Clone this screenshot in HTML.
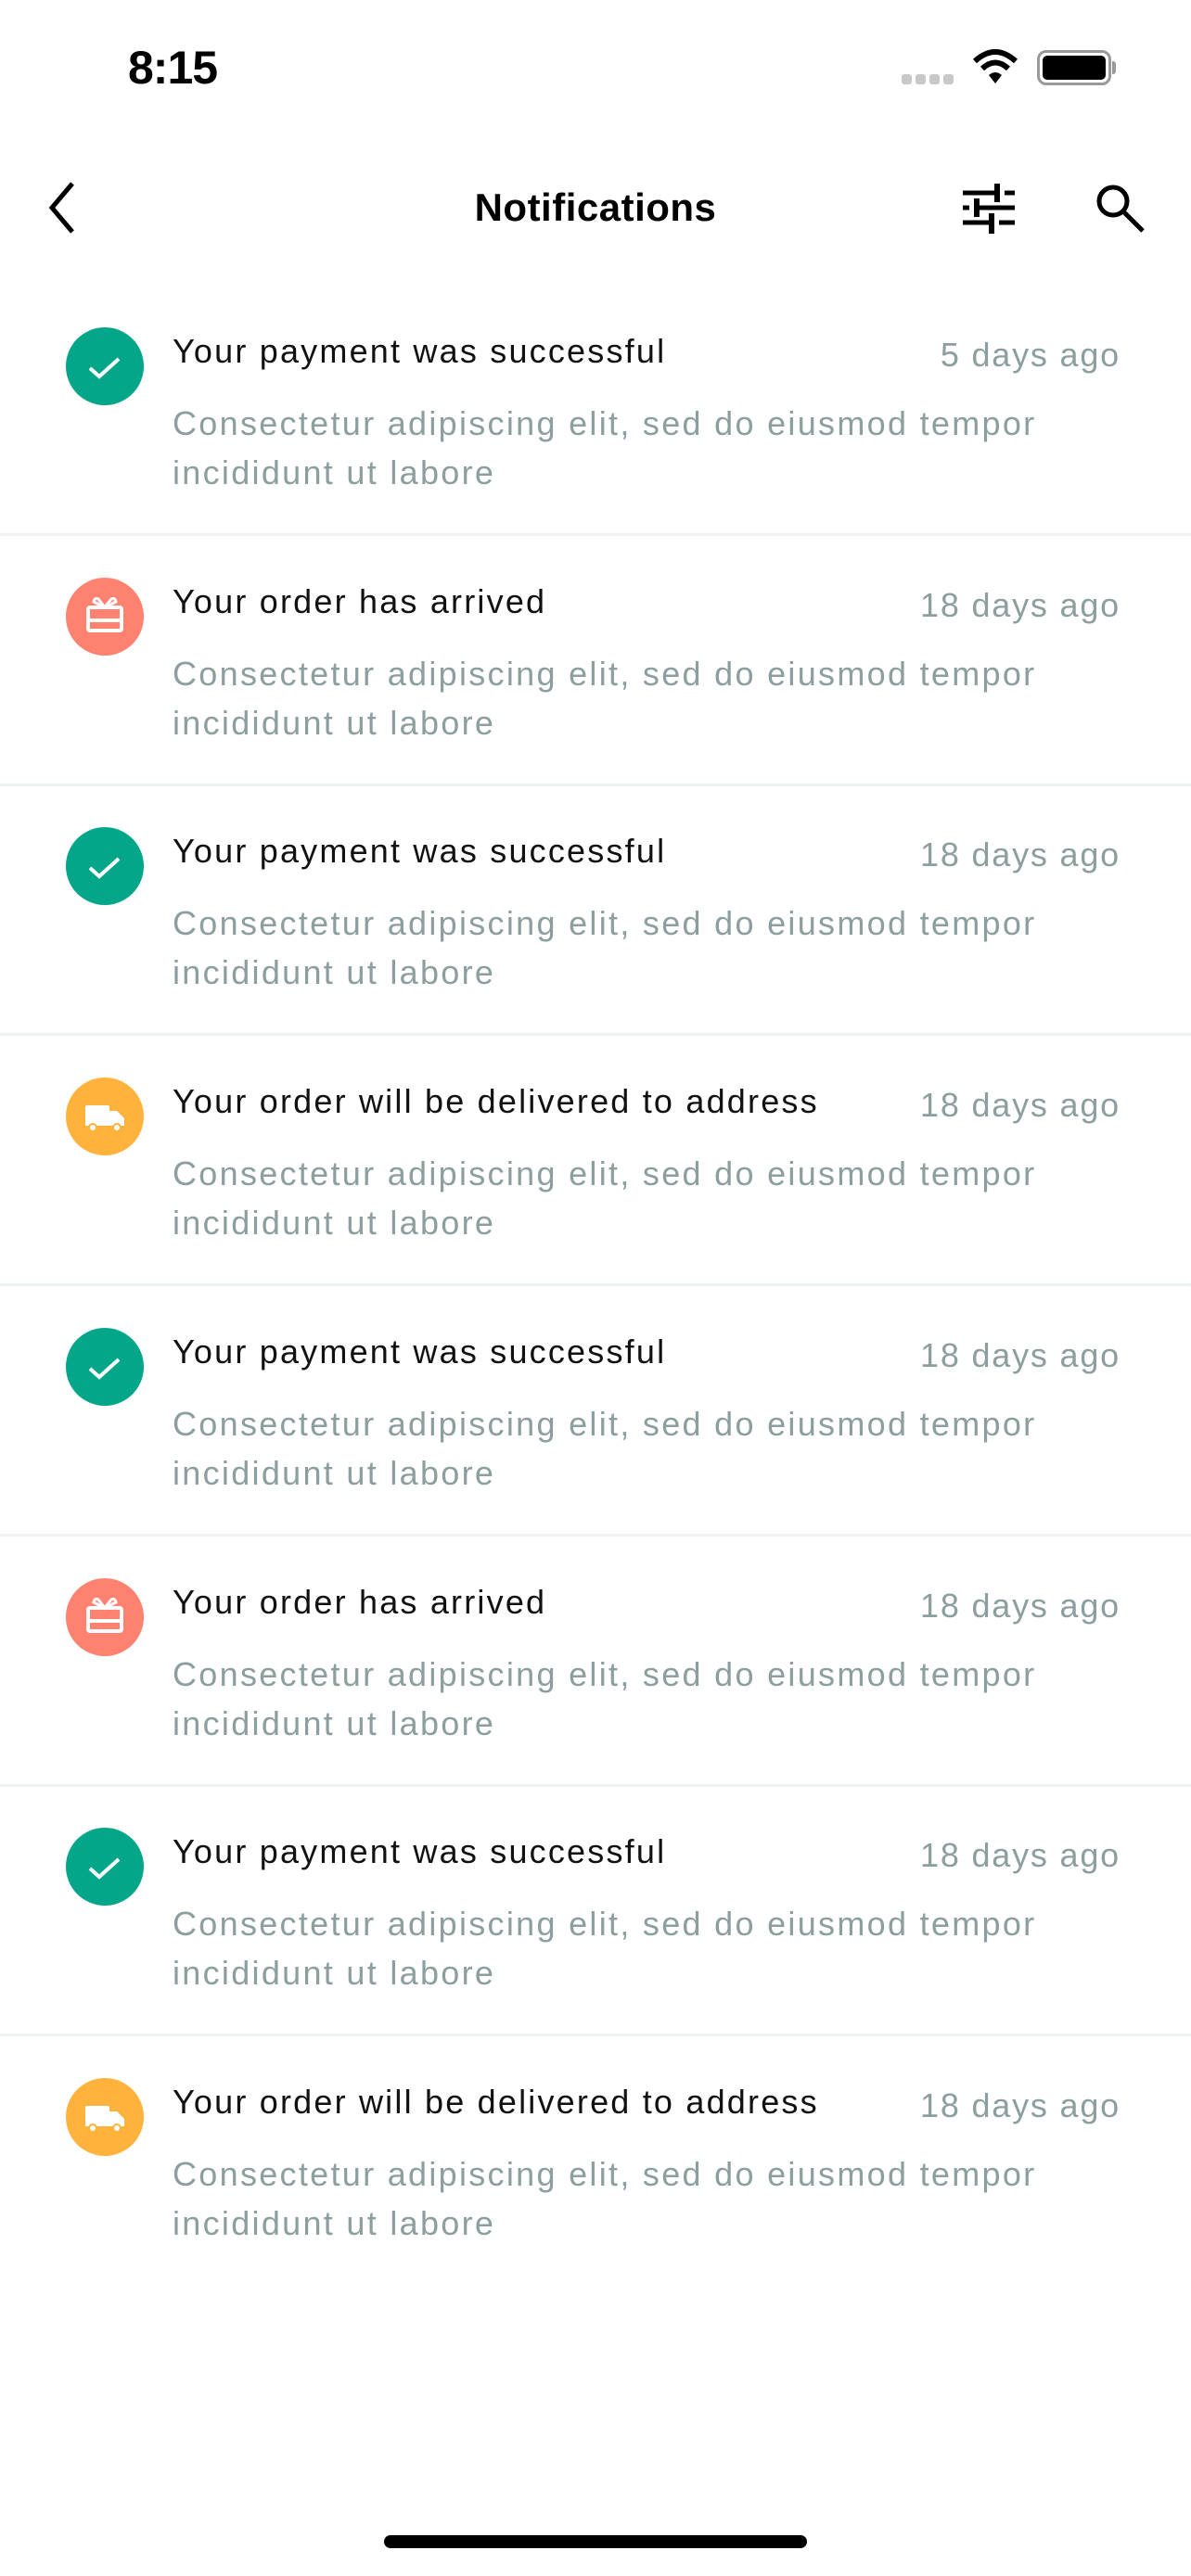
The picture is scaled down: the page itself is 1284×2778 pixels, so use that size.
<!DOCTYPE html>
<html><head><meta charset="utf-8"><style>
*{margin:0;padding:0;box-sizing:border-box}
body{width:1284px;height:2778px;background:#fff;font-family:"Liberation Sans",sans-serif;position:relative;overflow:hidden}
.abs{position:absolute}
.row{position:absolute;left:0;width:1284px;height:270px}
.sep{position:absolute;left:0;width:1284px;height:3px;background:#eff2f2}
.ic{position:absolute;left:71px;top:19px;width:84px;height:84px;border-radius:50%}
.t{position:absolute;left:186px;top:24px;font-size:36px;color:#111;letter-spacing:2.2px;white-space:nowrap}
.d{position:absolute;left:186px;top:96px;font-size:36px;color:#8c9e9d;letter-spacing:2.3px;line-height:53px;width:1050px}
.tm{position:absolute;right:76px;top:28px;font-size:36px;color:#8c9e9d;letter-spacing:1.8px;white-space:nowrap}
</style></head><body>
<div class="abs" style="left:138px;top:44px;font-size:50px;font-weight:bold;letter-spacing:-1px">8:15</div>
<div class="abs" style="left:972px;top:80px;width:58px;height:11px;display:flex;gap:4px">
<div style="width:11px;height:11px;border-radius:3px;background:#c8c8c8"></div><div style="width:11px;height:11px;border-radius:3px;background:#c8c8c8"></div><div style="width:11px;height:11px;border-radius:3px;background:#c8c8c8"></div><div style="width:11px;height:11px;border-radius:3px;background:#c8c8c8"></div></div>
<svg class="abs" style="left:1048px;top:52px" width="50" height="40" viewBox="0 0 50 40"><path d="M3 14 Q25 -6 47 14" stroke="#000" stroke-width="6" fill="none"/><path d="M11 22 Q25 9 39 22" stroke="#000" stroke-width="6" fill="none"/><path d="M18 29 L25 38 L32 29 Q25 23 18 29Z" fill="#000"/></svg>
<div class="abs" style="left:1118px;top:54px;width:80px;height:38px;border:3px solid #999;border-radius:10px;padding:3px"><div style="width:100%;height:100%;background:#000;border-radius:5px"></div></div>
<div class="abs" style="left:1199px;top:66px;width:4px;height:14px;background:#999;border-radius:0 3px 3px 0"></div>

<svg class="abs" style="left:44px;top:194px" width="44" height="60" viewBox="0 0 44 60"><path d="M34 4 L12 30 L34 56" stroke="#000" stroke-width="5" fill="none"/></svg>
<div class="abs" style="left:0;width:1284px;top:200px;text-align:center;font-size:42px;font-weight:bold;letter-spacing:0.5px">Notifications</div>
<svg class="abs" style="left:1036px;top:196px" width="60" height="58" viewBox="0 0 60 58"><g stroke="#000" stroke-width="5"><path d="M2 12H58M2 28H58M2 44H58"/></g><g fill="#000"><rect x="36" y="2" width="6" height="20"/><rect x="14" y="18" width="6" height="20"/><rect x="30" y="34" width="6" height="22"/></g><g fill="#fff"><rect x="42" y="9" width="5" height="6"/><rect x="9" y="25" width="5" height="6"/><rect x="36" y="41" width="5" height="6"/></g></svg>
<svg class="abs" style="left:1180px;top:196px" width="58" height="56" viewBox="0 0 58 56"><circle cx="20" cy="21" r="15" stroke="#000" stroke-width="5" fill="none"/><path d="M31 32 L52 53" stroke="#000" stroke-width="5"/></svg>

<div id="rows"></div>
<script>
(function(){
var G='#03a688',R='#ff8170',Y='#ffb23c';
var chk='<svg width="84" height="84" viewBox="0 0 84 84"><path d="M26 44 L36 53 L57 34" stroke="#fff" stroke-width="4" fill="none"/></svg>';
var gift='<svg width="84" height="84" viewBox="0 0 84 84"><rect x="24" y="32" width="36" height="25" rx="2" stroke="#fff" stroke-width="4" fill="none"/><path d="M26 46H58" stroke="#fff" stroke-width="4"/><path d="M42 32 L35 23 Q31 21 30 26 L42 32 L54 26 Q53 21 49 23Z" stroke="#fff" stroke-width="3" fill="none"/></svg>';
var truck='<svg width="84" height="84" viewBox="0 0 84 84"><rect x="21" y="30" width="26" height="20" rx="2" fill="#fff"/><path d="M47 36H55L63 44V51H47Z" fill="#fff"/><rect x="21" y="48" width="42" height="4" fill="#fff"/><circle cx="29" cy="54" r="4" fill="#fff" stroke="'+Y+'" stroke-width="2"/><circle cx="55" cy="54" r="4" fill="#fff" stroke="'+Y+'" stroke-width="2"/></svg>';
var d=[[G,chk,'Your payment was successful','5 days ago'],[R,gift,'Your order has arrived','18 days ago'],[G,chk,'Your payment was successful','18 days ago'],[Y,truck,'Your order will be delivered to address','18 days ago'],[G,chk,'Your payment was successful','18 days ago'],[R,gift,'Your order has arrived','18 days ago'],[G,chk,'Your payment was successful','18 days ago'],[Y,truck,'Your order will be delivered to address','18 days ago']];
var h='';
for(var i=0;i<8;i++){var yy=334+i*269.7;
h+='<div class="row" style="top:'+yy+'px"><div class="ic" style="background:'+d[i][0]+'">'+d[i][1]+'</div><div class="t">'+d[i][2]+'</div><div class="tm">'+d[i][3]+'</div><div class="d">Consectetur adipiscing elit, sed do eiusmod tempor<br>incididunt ut labore</div></div>';
if(i<7)h+='<div class="sep" style="top:'+(575+i*269.7)+'px"></div>';}
document.getElementById('rows').innerHTML=h;
})();
</script>
<div class="abs" style="left:414px;top:2734px;width:456px;height:14px;border-radius:7px;background:#000"></div>
</body></html>
